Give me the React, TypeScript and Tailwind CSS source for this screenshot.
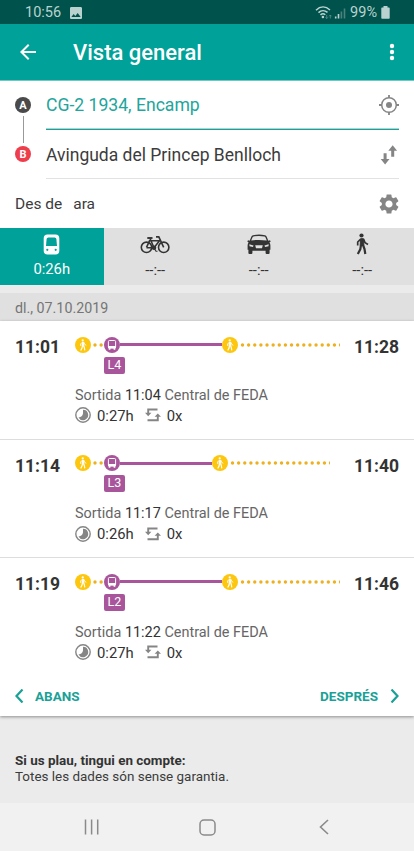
import React from "react";
import { MdArrowBack, MdImage, MdSettings } from "react-icons/md";

interface Trip {
  id: number;
  start: string;
  end: string;
  line: string;
  departure: string;
  duration: string;
  rideWidth: number;
  walkWidth: number;
}

const trips: Trip[] = [
  { id: 1, start: "11:01", end: "11:28", line: "L4", departure: "11:04", duration: "0:27h", rideWidth: 101.5, walkWidth: 102 },
  { id: 2, start: "11:14", end: "11:40", line: "L3", departure: "11:17", duration: "0:26h", rideWidth: 91.5, walkWidth: 102 },
  { id: 3, start: "11:19", end: "11:46", line: "L2", departure: "11:22", duration: "0:27h", rideWidth: 101.5, walkWidth: 102 },
];

const StatusBar = () => (
  <div className="h-6 bg-[#00524c] flex items-center pl-[25px] pr-[24px] pt-[3px] text-[#b9d2cf]">
    <span className="text-[14.5px] leading-none">10:56</span>
    <MdImage className="ml-[7px] -mt-[2px]" size={16} />
    <svg className="ml-auto -mt-px" width="31" height="16" viewBox="0 0 31 16" fill="none">
      <path d="M1 5.200C5.300 1 10.700 1 15 5M3.500 7.600c2.600-2.500 6.300-2.500 9-.2M5.500 9.900c1.500-1.400 3.400-1.400 4.800-.1" stroke="currentColor" strokeWidth="1.500" />
      <circle cx="7.900" cy="12" r="1.300" fill="currentColor" />
      <path d="M11.700 10v3.500M10.500 12.300l1.200 1.300 1.200-1.300M15.300 13.500V10M14.100 11.300l1.200-1.300 1.200 1.300" stroke="#5f918c" strokeWidth=".8" />
      <path d="M20.700 13.500v-2M23.500 13.500V9" stroke="currentColor" strokeWidth="1.600" />
      <path d="M26.400 13.500V6.500M29.500 13.500V3.500" stroke="#4b827d" strokeWidth="1.600" />
    </svg>
    <span className="ml-[4px] text-[14.500px] leading-none">99%</span>
    <svg className="ml-[4px] -mt-[2px]" width="9" height="13" viewBox="0 0 9 13" fill="currentColor">
      <path d="M2.500 0h4v1.500H8a.7.7 0 0 1 .7.700V12a.7.7 0 0 1-.7.700H1a.7.7 0 0 1-.7-.7V2.200a.7.7 0 0 1 .7-.7h1.500z" />
    </svg>
  </div>
);

const Header = () => (
  <div className="h-14 bg-[#00a198] flex items-center pl-4 pr-[18px] text-white">
    <MdArrowBack size={24} />
    <h1 className="ml-[33px] pt-[2px] text-[22px] font-medium leading-none">Vista general</h1>
    <svg className="ml-auto" width="8" height="18" viewBox="0 0 8 18" fill="currentColor">
      <circle cx="4" cy="3" r="2.200" />
      <circle cx="4" cy="9" r="2.200" />
      <circle cx="4" cy="15" r="2.200" />
    </svg>
  </div>
);

const LocationIcon = () => (
  <svg width="20" height="20" viewBox="0 0 20 20" fill="none" stroke="#858585">
    <circle cx="10" cy="10" r="7.300" strokeWidth="1.500" />
    <circle cx="10" cy="10" r="3" fill="#858585" stroke="none" />
    <path d="M10 0v3M10 17v3M0 10h3M17 10h3" strokeWidth="1.800" />
  </svg>
);

const SwapIcon = () => (
  <svg width="20" height="20" viewBox="0 0 20 20" fill="#858585">
    <path d="M4.600 8.200h3v5.800h2.900L6.100 19.500 1.700 14h2.900z" />
    <path d="M12.200 11.800h3V5.800h2.900L13.700.3 9.300 5.800h2.900z" />
  </svg>
);

const SearchForm = () => (
  <div className="h-[148px] bg-white border-t border-[#6fc9c3] flex flex-col">
    <div className="flex pl-[15px] pr-[15px]">
      <div className="w-[31px] flex flex-col pt-4">
        <span className="size-4 rounded-full bg-[#4a4a4a] text-white text-[11px] font-bold flex items-center justify-center leading-none">A</span>
        <span className="w-px h-[27px] my-[3px] ml-[7.500px] bg-[#999999]" />
        <span className="size-4 rounded-full bg-[#ee3e4c] text-white text-[11px] font-bold flex items-center justify-center leading-none">B</span>
      </div>
      <div className="flex-1">
        <div className="h-12 pt-px flex items-center justify-between border-b border-[#a6d9d5]">
          <span className="text-[17.600px] text-[#22a59c]">CG-2 1934, Encamp</span>
          <LocationIcon />
        </div>
        <div className="h-px bg-[#1f9f96]" />
        <div className="h-12 pt-[2px] flex items-center justify-between">
          <span className="text-[17.500px] text-[#3c3c3c]">Avinguda del Princep Benlloch</span>
          <SwapIcon />
        </div>
        <div className="h-px bg-[#e2e2e2]" />
      </div>
    </div>
    <div className="flex-1 flex items-center pl-[15px] pr-[13px] text-[15.500px] text-[#3c3c3c]">
      <span className="pt-[2px]">Des de</span>
      <span className="ml-[11px] pt-[2px]">ara</span>
      <MdSettings className="ml-auto text-[#858585]" size={24} />
    </div>
  </div>
);

const TrainIcon = () => (
  <svg width="17" height="21" viewBox="0 0 17 21">
    <path d="M4.500.5h8A3.800 3.800 0 0 1 16.300 4.300v12.400a3.800 3.800 0 0 1-3.800 3.800h-8a3.800 3.800 0 0 1-3.800-3.800V4.300A3.800 3.800 0 0 1 4.500.5z" fill="white" />
    <path d="M5.300 3.500h6.400q1.500 0 1.700 1.500l.6 7H3l.6-7q.2-1.500 1.700-1.500z" fill="#00a198" />
    <circle cx="4.300" cy="15.800" r="1.100" fill="#00a198" />
    <circle cx="12.700" cy="15.800" r="1.100" fill="#00a198" />
  </svg>
);

const BikeIcon = () => (
  <svg width="30" height="21" viewBox="0 0 30 21" fill="none" stroke="#333" strokeWidth="1.600">
    <circle cx="6.500" cy="13.300" r="5.200" />
    <circle cx="23.700" cy="13.300" r="5.200" />
    <path d="M6.500 13.300 9.500 6.800H19.500L14 13.700H6.500M14 13.700 10 4.500M23.700 13.300 18.800 2.900H16" />
    <path d="M7.300 4h5.200" strokeWidth="1.900" />
    <circle cx="14" cy="13.700" r="1.500" fill="#333" />
    <path d="M14 14l2 3.200h1.500" strokeWidth="1.100" />
  </svg>
);

const CarIcon = () => (
  <svg width="24" height="21" viewBox="0 0 24 21">
    <path d="M6 1.200Q12-.2 18 1.200q1.200.4 1.700 1.600l1.600 4 1.700-.6.700 1.300-1.300 1q1 1.200 1 3v4.300h-.8V19q0 1-1 1h-2q-1 0-1-1v-2.200H5.400V19q0 1-1 1h-2q-1 0-1-1v-3.200H.6v-4.300q0-1.800 1-3L.3 7.500 1 6.200l1.700.6 1.600-4Q4.800 1.600 6 1.200z" fill="#333" />
    <path d="M6.600 2.400q5.400-1 10.800 0 .7.200 1 .8l1.400 3.200q-7.800-1-15.600 0l1.400-3.200q.3-.6 1-.8z" fill="#e0e0e0" />
    <path d="M2.300 10.200l4.200 1.300-.5 1.500-3.500-.7zM21.700 10.200l-4.200 1.300.5 1.500 3.500-.7zM8.200 11.300h7.600l-.8 2.900H9z" fill="#e0e0e0" />
  </svg>
);

const WalkIcon: React.FC<{ width: number; height: number }> = ({ width, height }) => (
  <svg width={width} height={height} viewBox="0 0 14 22" fill="none" stroke="currentColor" strokeLinejoin="round">
    <circle cx="6.500" cy="2.500" r="2.100" fill="currentColor" stroke="none" />
    <path d="M5.500 5.700 8.600 5.700 8.800 12.500H5.200z" fill="currentColor" strokeWidth="1" />
    <path d="M5.400 6.300 2.700 9v3.600M8.500 6.200l1.500 3.400 3 1.900" strokeWidth="1.700" />
    <path d="M6 12l-.7 4.300L2.800 21M8 12l1.500 4 .8 5" strokeWidth="2.200" />
  </svg>
);

const ModeTabs = () => (
  <div className="h-[57px] grid grid-cols-4 bg-[#e0e0e0] text-[14.800px] text-[#333333]">
    <div className="bg-[#00a198] text-white flex flex-col items-center pt-[6px]">
      <TrainIcon />
      <span className="mt-[5px] leading-[18px]">0:26h</span>
    </div>
    <div className="flex flex-col items-center pt-[6px]">
      <BikeIcon />
      <span className="mt-[6px] leading-[18px]">--:--</span>
    </div>
    <div className="flex flex-col items-center pt-[6px]">
      <CarIcon />
      <span className="mt-[6px] leading-[18px]">--:--</span>
    </div>
    <div className="flex flex-col items-center pt-[5px]">
      <WalkIcon width={14} height={22} />
      <span className="mt-[6px] leading-[18px]">--:--</span>
    </div>
  </div>
);

const WalkBadge = () => (
  <span className="size-4 shrink-0 rounded-full bg-[#fdc60f] text-white flex items-center justify-center">
    <WalkIcon width={8} height={12} />
  </span>
);

const BusBadge = () => (
  <svg className="shrink-0" width="16" height="16" viewBox="0 0 16 16">
    <circle cx="8" cy="8" r="8" fill="#a8559c" />
    <rect x="4.400" y="3.500" width="7.200" height="7.500" rx="1" fill="none" stroke="white" strokeWidth="1" />
    <path d="M4.200 9h7.600v2.200H4.200zM4.700 11h1.700v1.700H4.700zM9.600 11h1.700v1.700H9.600z" fill="white" />
  </svg>
);

const Dots: React.FC<{ width: number; offset: number }> = ({ width, offset }) => (
  <svg className="shrink-0" width={width} height="4" viewBox={`0 0 ${width} 4`}>
    <line x1={offset} y1="2" x2={width + 6} y2="2" stroke="#efb01e" strokeWidth="3.400" strokeLinecap="round" strokeDasharray="0 6.130" />
  </svg>
);

const DurationIcon = () => (
  <svg width="16" height="16" viewBox="0 0 16 16">
    <circle cx="8" cy="8" r="7.200" fill="none" stroke="#858585" strokeWidth="1.400" />
    <path d="M8 2.800a5.200 5.200 0 1 1-4.500 7.800Q7.500 10 8 6.500z" fill="#858585" />
  </svg>
);

const TransferIcon = () => (
  <svg width="16" height="14" viewBox="0 0 16 14" fill="none" stroke="#858585" strokeWidth="1.900">
    <path d="M12.500 1.500H3.200V6M2.500 12.300h10.300V7.500" />
    <path d="M0 4.800h6.400L3.200 8.200zM9.600 8.800H16l-3.200-3.400z" fill="#858585" stroke="none" />
  </svg>
);

const TripRow: React.FC<{ trip: Trip }> = ({ trip }) => (
  <div className="h-[118.500px] flex pl-[15px] pr-[15px] pt-[15.500px] text-[#333333]">
    <span className="w-[60px] text-[17.500px] font-bold leading-[21px] pt-[.5px]">{trip.start}</span>
    <div className="flex-1">
      <div className="h-4 flex items-center">
        <WalkBadge />
        <Dots width={13} offset={4} />
        <BusBadge />
        <span className="h-[3px] bg-[#a8559c]" style={{ width: trip.rideWidth }} />
        <WalkBadge />
        <Dots width={trip.walkWidth} offset={4.5} />
      </div>
      <span className="mt-1 ml-[29px] w-[21px] h-[17px] rounded-[2px] bg-[#a8559c] text-white text-[12.500px] leading-none flex items-center justify-center">
        {trip.line}
      </span>
      <p className="mt-[13px] text-[14.450px] leading-[18px] text-[#666666]">
        Sortida <span className="text-[#333333]">{trip.departure}</span> Central de FEDA
      </p>
      <div className="mt-px h-[19px] flex items-center text-[14.800px] leading-none">
        <DurationIcon />
        <span className="ml-[6px] pt-[2px]">{trip.duration}</span>
        <span className="ml-[11px]">
          <TransferIcon />
        </span>
        <span className="ml-[6px] pt-[2px]">0x</span>
      </div>
    </div>
    <span className="pt-[.5px] text-[17.500px] font-bold leading-[21px]">{trip.end}</span>
  </div>
);

const Pager = () => (
  <div className="h-[39px] flex items-center justify-between px-[15px] text-[13.500px] font-bold text-[#1aa197]">
    <div className="flex items-center">
      <svg className="-mt-px" width="9" height="14" viewBox="0 0 9 14" fill="none" stroke="currentColor" strokeWidth="2.200">
        <path d="M7.500.5 1.500 7l6 6.500" />
      </svg>
      <span className="ml-[11px]">ABANS</span>
    </div>
    <div className="flex items-center">
      <span className="mr-[12px]">DESPRÉS</span>
      <svg className="-mt-px" width="9" height="14" viewBox="0 0 9 14" fill="none" stroke="currentColor" strokeWidth="2.200">
        <path d="M1.500.5l6 6.500-6 6.500" />
      </svg>
    </div>
  </div>
);

const NavBar = () => (
  <div className="h-12 bg-[#f1f1f1] flex items-center justify-between pl-[83px] pr-[85px] text-[#8a8a8a]">
    <svg width="17" height="16" viewBox="0 0 17 16" stroke="currentColor" strokeWidth="1.500">
      <path d="M2.500.5v15M8.600.5v15M14.700.5v15" />
    </svg>
    <svg className="mr-[5px]" width="17" height="17" viewBox="0 0 17 17" fill="none" stroke="currentColor" strokeWidth="1.500">
      <rect x="1" y="1" width="15" height="15" rx="4" />
    </svg>
    <svg width="10" height="16" viewBox="0 0 10 16" fill="none" stroke="currentColor" strokeWidth="1.600">
      <path d="M9 1 1.500 8 9 15" />
    </svg>
  </div>
);

const App = () => {
  return (
    <div className="w-[414px] h-[851px] overflow-hidden bg-[#ebebeb] font-['Roboto',sans-serif] flex flex-col">
      <StatusBar />
      <Header />
      <SearchForm />
      <ModeTabs />
      <div className="mt-2 h-7 bg-[#e0e0e0] flex items-center pl-[15px] pt-[3px] text-[14.250px] text-[#757575]">
        dl., 07.10.2019
      </div>
      <div className="h-[395px] bg-white shadow-[0_1px_3px_rgba(0,0,0,0.400)] flex flex-col">
        <div className="divide-y divide-[#dddddd]">
          {trips.map((trip) => (
            <TripRow key={trip.id} trip={trip} />
          ))}
        </div>
        <Pager />
      </div>
      <div className="flex-1 pl-[15px] pt-[37px] text-[13.450px] leading-[15.500px] text-[#3c3c3c]">
        <p className="font-bold text-[#333333]">Si us plau, tingui en compte:</p>
        <p>Totes les dades són sense garantia.</p>
      </div>
      <NavBar />
    </div>
  );
};

export default App;
